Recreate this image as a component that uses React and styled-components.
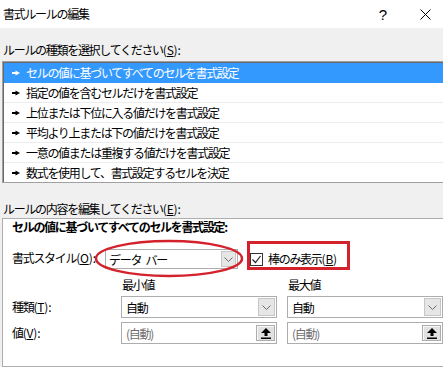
import React from 'react';
import styled, { createGlobalStyle } from 'styled-components';

const GlobalStyle = createGlobalStyle`
  html, body {
    margin: 0;
    padding: 0;
  }
  body {
    width: 443px;
    height: 367px;
    overflow: hidden;
    background: #f0f0f0;
    font-family: "Noto Sans CJK JP", "Noto Sans", sans-serif;
    font-size: 12px;
    color: #000;
  }
`;

const RED = '#d3222b';

const Dialog = styled.div`
  width: 443px;
  height: 367px;
  overflow: hidden;
  display: flex;
  flex-direction: column;
  background: #f0f0f0;
  letter-spacing: -1.3px;
`;

const TitleBar = styled.div`
  height: 28px;
  flex: none;
  background: #fff;
  display: flex;
  align-items: center;
  padding-left: 3px;
  padding-right: 8px;
`;

const TitleText = styled.span`
  flex: 1;
  padding-bottom: 2px;
`;

const TitleButton = styled.span`
  width: 20px;
  height: 20px;
  display: flex;
  align-items: center;
  justify-content: center;
  font-family: "Liberation Sans", sans-serif;
  font-size: 15px;
  letter-spacing: 0;
  margin-left: ${({ gap }) => gap || 0}px;
`;

const MnemonicText = styled.span`
  letter-spacing: -0.2px;
`;

const Mnemonic = ({ k, colon = true }) => (
  <MnemonicText>
    (<u>{k}</u>){colon ? ':' : ''}
  </MnemonicText>
);

const SectionLabel = styled.div`
  line-height: 16px;
  margin: ${({ top }) => top}px 0 ${({ bottom }) => bottom}px 3px;
`;

const RuleList = styled.ul`
  list-style: none;
  margin: 0 0 0 2px;
  padding: 1px 0 0 1px;
  width: 446px;
  background: #fff;
  border: 1px solid #a0a0a0;
  box-shadow: inset 1px 1px 0 #696969;
`;

const RuleRow = styled.li`
  height: 19px;
  display: flex;
  align-items: center;
  padding-left: 8px;
  gap: 6px;
  border-bottom: 1px solid ${({ selected }) => (selected ? '#3399ff' : '#ececec')};
  background: ${({ selected }) => (selected ? '#3399ff' : '#fff')};
  color: ${({ selected }) => (selected ? '#fff' : '#000')};

  &:last-child {
    border-bottom: none;
  }
`;

const Panel = styled.div`
  flex: 1;
  margin-left: 2px;
  width: 446px;
  background: #fff;
  border: 1px solid #adadad;
  padding-left: 9px;
`;

const Heading = styled.div`
  font-weight: bold;
  line-height: 16px;
`;

const StyleRow = styled.div`
  display: flex;
  align-items: center;
  height: 20px;
  margin-top: 14px;
`;

const StyleLabel = styled.span`
  width: 93px;
  flex: none;
  white-space: nowrap;
  padding-bottom: 3px;
`;

const ComboWrap = styled.div`
  position: relative;
  width: 133px;
  height: 20px;
  flex: none;
`;

const Select = styled.div`
  box-sizing: border-box;
  height: ${({ h }) => h}px;
  border: 1px solid #adadad;
  background: #fff;
  display: flex;
  align-items: center;
  padding-left: ${({ pad }) => pad}px;
  color: ${({ muted }) => (muted ? '#6d6d6d' : '#000')};
`;

const SelectText = styled.span`
  flex: 1;
  white-space: pre;
  word-spacing: 3px;
`;

const DropButton = styled.span`
  box-sizing: border-box;
  width: ${({ w }) => w}px;
  height: ${({ h }) => h}px;
  margin-right: 1px;
  background: #e6e6e6;
  border: 1px solid #c6c6c6;
  display: flex;
  align-items: center;
  justify-content: center;
`;

const PickButton = styled.span`
  box-sizing: border-box;
  width: 19px;
  height: 16px;
  margin-right: 1px;
  background: #e1e1e1;
  border: 1px solid #adadad;
  box-shadow: inset 1px 1px 0 #f8f8f8;
  display: flex;
  align-items: center;
  justify-content: center;
`;

const EllipseMark = styled.svg`
  position: absolute;
  left: -12px;
  top: -11px;
  overflow: visible;
  pointer-events: none;
`;

const CheckWrap = styled.label`
  position: relative;
  display: flex;
  align-items: center;
  gap: 5px;
  margin-left: 12px;
  line-height: 16px;

  &::after {
    content: '';
    position: absolute;
    left: -3px;
    top: -10px;
    width: 103px;
    height: 29px;
    box-sizing: border-box;
    border: 3px solid ${RED};
  }
`;

const CheckBox = styled.span`
  box-sizing: border-box;
  width: 13px;
  height: 13px;
  border: 1px solid #333;
  background: #fff;
  display: flex;
  align-items: center;
  justify-content: center;
`;

const ValueGrid = styled.div`
  display: grid;
  grid-template-columns: 99px 156px 156px;
  grid-template-rows: 15px 22px 22px;
  column-gap: 10px;
  row-gap: 4px;
  margin-top: 8px;
  align-items: center;
`;

const ColHead = styled.span`
  padding-left: 1px;
  line-height: 15px;
`;

const RowLabel = styled.span`
  padding-bottom: 2px;
`;

const Arrow = ({ color }) => (
  <svg width="8" height="6" viewBox="0 0 8 6">
    <rect x="0" y="2" width="4" height="2" fill={color} />
    <polygon points="3.5,0.5 8,3 3.5,5.5" fill={color} />
  </svg>
);

const Chevron = () => (
  <svg width="9" height="5" viewBox="0 0 9 5">
    <polyline points="0.5,0.5 4.5,4.5 8.5,0.5" fill="none" stroke="#6a6a6a" strokeWidth="1" />
  </svg>
);

const UpArrow = () => (
  <svg width="10" height="11" viewBox="0 0 10 11">
    <polygon points="5,0 10,5 6.5,5 6.5,8 3.5,8 3.5,5 0,5" fill="#000" />
    <rect x="0" y="9.5" width="10" height="1.5" fill="#000" />
  </svg>
);

const rules = [
  'セルの値に基づいてすべてのセルを書式設定',
  '指定の値を含むセルだけを書式設定',
  '上位または下位に入る値だけを書式設定',
  '平均より上または下の値だけを書式設定',
  '一意の値または重複する値だけを書式設定',
  '数式を使用して、書式設定するセルを決定',
];

export default function App() {
  return (
    <>
      <GlobalStyle />
      <Dialog>
        <TitleBar>
          <TitleText>書式ルールの編集</TitleText>
          <TitleButton>?</TitleButton>
          <TitleButton gap={22}>
            <svg width="11" height="11" viewBox="0 0 11 11">
              <path d="M0.5 0.5L10.5 10.5M10.5 0.5L0.5 10.5" stroke="#000" strokeWidth="1" />
            </svg>
          </TitleButton>
        </TitleBar>

        <SectionLabel top={14} bottom={3}>
          ルールの種類を選択してください<Mnemonic k="S" />
        </SectionLabel>
        <RuleList>
          {rules.map((r, i) => (
            <RuleRow key={r} selected={i === 0}>
              <Arrow color={i === 0 ? '#fff' : '#000'} />
              {r}
            </RuleRow>
          ))}
        </RuleList>

        <SectionLabel top={18} bottom={1}>
          ルールの内容を編集してください<Mnemonic k="E" />
        </SectionLabel>
        <Panel>
          <Heading>セルの値に基づいてすべてのセルを書式設定:</Heading>
          <StyleRow>
            <StyleLabel>書式スタイル<Mnemonic k="O" /></StyleLabel>
            <ComboWrap>
              <Select h={20} pad={3}>
                <SelectText>データ バー</SelectText>
                <DropButton w={15} h={16}><Chevron /></DropButton>
              </Select>
              <EllipseMark width="156" height="41" viewBox="0 0 156 41">
                <ellipse cx="76" cy="20.5" rx="73" ry="17.5" fill="none" stroke={RED} strokeWidth="2.5" />
              </EllipseMark>
            </ComboWrap>
            <CheckWrap>
              <CheckBox>
                <svg width="11" height="11" viewBox="0 0 11 11">
                  <polyline points="1.5,5.5 4.5,8.5 9.5,2" fill="none" stroke="#222" strokeWidth="1.2" />
                </svg>
              </CheckBox>
              <span>棒のみ表示<Mnemonic k="B" colon={false} /></span>
            </CheckWrap>
          </StyleRow>

          <ValueGrid>
            <span />
            <ColHead>最小値</ColHead>
            <ColHead>最大値</ColHead>

            <RowLabel>種類<Mnemonic k="T" /></RowLabel>
            <Select h={22} pad={4}>
              <SelectText>自動</SelectText>
              <DropButton w={17} h={18}><Chevron /></DropButton>
            </Select>
            <Select h={22} pad={4}>
              <SelectText>自動</SelectText>
              <DropButton w={17} h={18}><Chevron /></DropButton>
            </Select>

            <RowLabel>値<Mnemonic k="V" /></RowLabel>
            <Select h={22} pad={4} muted>
              <SelectText>(自動)</SelectText>
              <PickButton><UpArrow /></PickButton>
            </Select>
            <Select h={22} pad={4} muted>
              <SelectText>(自動)</SelectText>
              <PickButton><UpArrow /></PickButton>
            </Select>
          </ValueGrid>
        </Panel>
      </Dialog>
    </>
  );
}
